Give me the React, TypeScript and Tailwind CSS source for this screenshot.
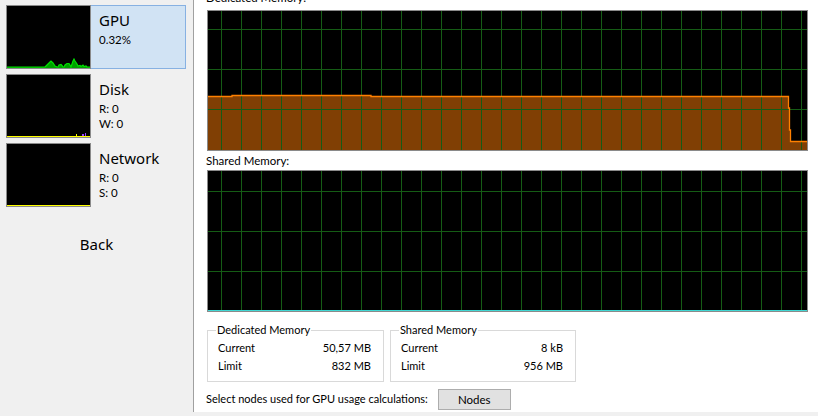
import React from "react";

const vLines = Array.from({ length: 30 }, (_, i) => 13 + i * 20);

function Grid({ h, hLines }: { h: number; hLines: number[] }) {
  return (
    <g>
      {vLines.map((x) => (
        <line key={"v" + x} x1={x + 0.5} y1={0} x2={x + 0.5} y2={h} stroke="#155c15" strokeWidth={1} />
      ))}
      {hLines.map((y) => (
        <line key={"h" + y} x1={0} y1={y + 0.5} x2={599} y2={y + 0.5} stroke="#155c15" strokeWidth={1} />
      ))}
    </g>
  );
}

function DedicatedGraph() {
  const top = "M0,85.5 L24,85.5 L24,84.5 L163,84.5 L163,85.5 L580.5,85.5 L580.5,97 L581.5,97 L581.5,119 L582.5,119 L582.5,130.5 L599,130.5";
  return (
    <div className="w-[601px] h-[141px] border border-[#8a8a8a] bg-black">
      <svg width="599" height="139" className="block">
        <path d={top + " L599,139 L0,139 Z"} fill="#803f04" />
        <Grid h={139} hLines={[18, 58, 98]} />
        <path d={top} fill="none" stroke="#ff8000" strokeWidth={1.3} />
      </svg>
    </div>
  );
}

function SharedGraph() {
  return (
    <div className="w-[601px] h-[142px] border border-[#8a8a8a] bg-black">
      <svg width="599" height="140" className="block">
        <Grid h={140} hLines={[20, 60, 100]} />
        <line x1={0} y1={139.5} x2={599} y2={139.5} stroke="#3fd8d4" strokeWidth={1} />
      </svg>
    </div>
  );
}

function GpuThumb() {
  const pts =
    "0,61 38,61 39,60 41,58 43,56 44,55 46,57 48,60 50,61 51,61 52,59 54,58.5 55,59.5 56,61 57,61 58,59 60,57.5 62,57.5 63,59 64,61 65,58 66,55 67,53 68,55 70,58 71,60 73,59.5 74,60.5 76,59 77,60.5 79,60 80,61 83,61";
  return (
    <svg width="83" height="62" className="block">
      <polygon points={pts + " 83,62 0,62"} fill="#00a000" />
      <polyline points={pts} fill="none" stroke="#00e000" strokeWidth={1.2} />
    </svg>
  );
}

function LineThumb({ dots }: { dots?: boolean }) {
  return (
    <svg width="83" height="62" className="block">
      <line x1={0} y1={61.5} x2={83} y2={61.5} stroke="#ffff00" strokeWidth={1.2} />
      {dots && (
        <g>
          <rect x={69} y={59} width={1} height={2} fill="#ffff00" />
          <rect x={75} y={59} width={2} height={2} fill="#9a40ff" />
          <rect x={78} y={58} width={1} height={3} fill="#9a40ff" />
        </g>
      )}
    </svg>
  );
}

function Item({
  selected,
  title,
  lines,
  thumb,
}: {
  selected?: boolean;
  title: string;
  lines: string[];
  thumb: React.ReactNode;
}) {
  return (
    <div
      className={
        "flex w-[180px] h-[64px] " +
        (selected ? "bg-[#d1e3f4] border border-[#87b1e2]" : "border border-transparent")
      }
    >
      <div className="-m-[1px] w-[85px] h-[64px] shrink-0 border border-[#8a8a8a] bg-black">{thumb}</div>
      <div className="ml-[9px] pt-[4px]">
        <div className="font-['Noto_Sans',sans-serif] text-[15px] leading-[20px]">{title}</div>
        <div className="mt-[2px] text-[11.5px] leading-[15px]">
          {lines.map((l) => (
            <div key={l}>{l}</div>
          ))}
        </div>
      </div>
    </div>
  );
}

function Group({ title, w, rows }: { title: string; w: string; rows: [string, string][] }) {
  return (
    <fieldset className={"border border-[#d9d9d9] px-[8px] pb-[6px] " + w}>
      <legend className="px-[1px] leading-[16px]">{title}</legend>
      <div className="pt-[1px] pl-[2px] pr-[4px]">
        {rows.map(([k, v]) => (
          <div key={k} className="flex justify-between h-[18px] leading-[18px]">
            <span>{k}</span>
            <span>{v}</span>
          </div>
        ))}
      </div>
    </fieldset>
  );
}

export default function App() {
  return (
    <div className="w-[818px] h-[416px] overflow-hidden bg-[#f0f0f0] text-black font-['Lato',sans-serif] text-[11px]">
      <div className="flex h-[412px]">
        <div className="w-[194px] shrink-0 border-r border-[#a0a0a0] bg-[#f0f0f0] flex flex-col">
          <div className="pt-[5px] pl-[6px] flex flex-col gap-[5px]">
            <Item selected title="GPU" lines={["0.32%"]} thumb={<GpuThumb />} />
            <Item title="Disk" lines={["R: 0", "W: 0"]} thumb={<LineThumb dots />} />
            <Item title="Network" lines={["R: 0", "S: 0"]} thumb={<LineThumb />} />
          </div>
          <div className="mt-[27px] text-center font-['Noto_Sans',sans-serif] text-[15px] leading-[20px]">Back</div>
        </div>
        <div className="flex-1 bg-white pl-[13px] flex flex-col">
          <div className="-mt-[10px] h-[16px] leading-[16px] -ml-[1px] text-[11.5px]">Dedicated Memory:</div>
          <div className="mt-[4px]">
            <DedicatedGraph />
          </div>
          <div className="mt-[2px] h-[16px] leading-[16px] -ml-[1px] text-[11.5px]">Shared Memory:</div>
          <div className="mt-[1px]">
            <SharedGraph />
          </div>
          <div className="mt-[10px] flex gap-[6px]">
            <Group
              title="Dedicated Memory"
              w="w-[177px]"
              rows={[
                ["Current", "50,57 MB"],
                ["Limit", "832 MB"],
              ]}
            />
            <Group
              title="Shared Memory"
              w="w-[186px]"
              rows={[
                ["Current", "8 kB"],
                ["Limit", "956 MB"],
              ]}
            />
          </div>
          <div className="mt-[7px] flex items-center -ml-[1px]">
            <span>Select nodes used for GPU usage calculations:</span>
            <button className="ml-[10px] w-[73px] h-[21px] bg-[#e1e1e1] border border-[#adadad] leading-[19px] text-[11.5px]">
              Nodes
            </button>
          </div>
        </div>
      </div>
    </div>
  );
}
